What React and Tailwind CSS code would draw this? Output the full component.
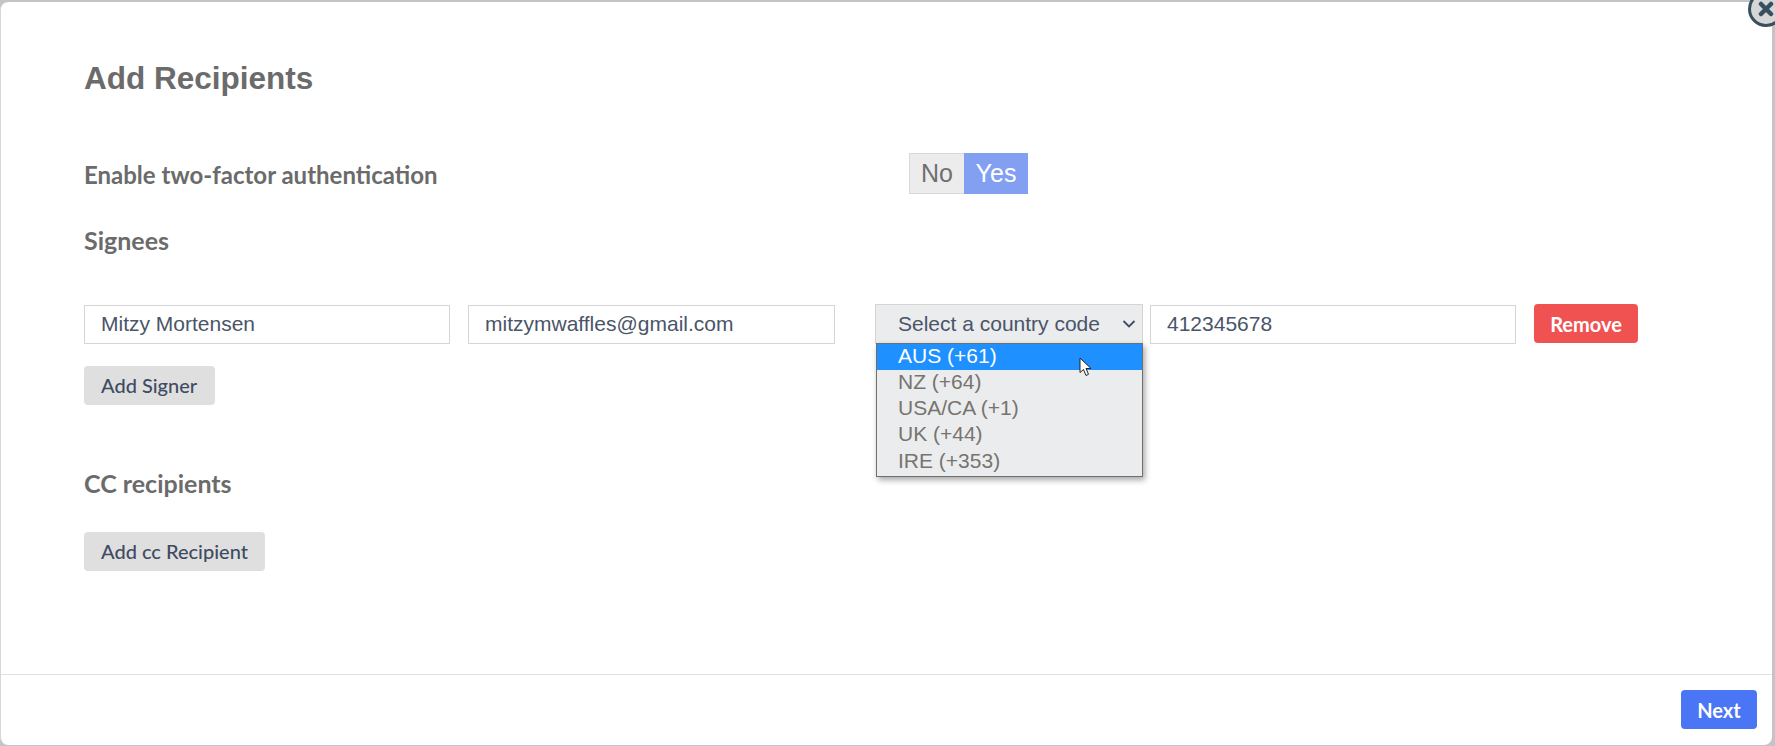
import React from 'react';

const inputClass = "h-[39px] border border-[#d5d5d5] bg-white pl-[16px] pb-[1px] text-[21px] text-[#4a5568] flex items-center";
const grayButton = "h-[39px] rounded-[4px] bg-[#dfdfdf] px-[17px] pb-[1px] text-[20px] font-medium text-[#3f4b63] flex items-center";
const labelClass = "font-bold text-[#6b6b6b]";

function CountryMenu() {
  const options = ['NZ (+64)', 'USA/CA (+1)', 'UK (+44)', 'IRE (+353)'];
  return (
    <div className="absolute left-[1px] top-[39px] z-10 w-[267px] h-[134px] border border-[#6f6f6f] bg-[#ebecee] shadow-[2px_3px_6px_rgba(0,0,0,0.35)] text-[21px]">
      <div className="h-[26px] bg-[#1e90ff] pl-[21px] leading-[24px] text-white">AUS (+61)</div>
      {options.map((o) => (
        <div key={o} className="h-[26.2px] pl-[21px] leading-[24px] text-[#77746f]">{o}</div>
      ))}
    </div>
  );
}

export default function App() {
  return (
    <div className="h-[746px] w-full overflow-hidden bg-[#c4c4c4] pt-[2px] pr-[3px] pb-[1px] relative" style={{ fontFamily: '"Liberation Sans", Arial, sans-serif' }}>
      <div className="h-full flex flex-col rounded-[8px] border-l border-[#d8d8d8] bg-white">
        {/* Body */}
        <div className="flex-1 pl-[83px]">
          <h1 className="mt-[58px] text-[31.5px] leading-[36px] font-bold text-[#6b6b6b]">Add Recipients</h1>

          <div className="mt-[57px] flex items-center h-[41px]">
            <div className={`${labelClass} text-[24px] w-[825px] pt-[2px]`} style={{ fontFamily: 'Lato, sans-serif' }}>Enable two-factor authentication</div>
            <div className="flex h-[41px] text-[25px]">
              <div className="w-[55px] flex items-center justify-center border border-r-0 border-[#d8d8d8] bg-[#ececec] text-[#6f6f6f]">No</div>
              <div className="w-[64px] flex items-center justify-center bg-[#829ff1] text-white">Yes</div>
            </div>
          </div>

          <div className={`${labelClass} text-[25px] mt-[33px] leading-[26px]`} style={{ fontFamily: 'Lato, sans-serif' }}>Signees</div>

          <div className="mt-[52px] flex items-start">
            <div className={`${inputClass} w-[366px]`}>Mitzy Mortensen</div>
            <div className={`${inputClass} w-[367px] ml-[18px]`}>mitzymwaffles@gmail.com</div>
            <div className="relative ml-[40px] w-[268px] -mt-[1px]">
              <div className="h-[40px] border border-[#d5d5d5] bg-[#ebecee] pl-[22px] pr-[6px] pb-[1px] text-[21px] text-[#4a5568] flex items-center justify-between">
                <span>Select a country code</span>
                <svg width="14" height="10" viewBox="0 0 14 10" fill="none" stroke="#3f4b63" strokeWidth="1.8">
                  <path d="M1.5 2 L7 7.5 L12.5 2" />
                </svg>
              </div>
              <CountryMenu />
              {/* Mouse pointer */}
              <svg className="absolute left-[204px] top-[53px] z-20" width="14" height="20" viewBox="0 0 14 20">
                <path d="M1 1 L1 15.5 L4.5 12.5 L7 18.5 L9.5 17.3 L7 11.5 L12 11.5 Z" fill="white" stroke="#222" strokeWidth="1" />
              </svg>
            </div>
            <div className={`${inputClass} w-[366px] ml-[7px]`}>412345678</div>
            <button className="ml-[18px] -mt-[1px] h-[39px] w-[104px] rounded-[4px] bg-[#f05252] text-[20px] font-bold text-white" style={{ fontFamily: 'Lato, sans-serif' }}>Remove</button>
          </div>

          <div className={`${grayButton} w-[131px] mt-[22px]`} style={{ fontFamily: 'Lato, sans-serif' }}>Add Signer</div>

          <div className={`${labelClass} text-[25px] mt-[65px] leading-[26px]`} style={{ fontFamily: 'Lato, sans-serif' }}>CC recipients</div>

          <div className={`${grayButton} w-[181px] mt-[36px]`} style={{ fontFamily: 'Lato, sans-serif' }}>Add cc Recipient</div>
        </div>

        {/* Footer */}
        <div className="h-[71px] border-t border-[#e2e2e2] flex justify-end items-start pt-[15px] pr-[15px]">
          <button className="h-[39px] w-[76px] rounded-[4px] bg-[#4a75f5] text-[20px] font-bold text-white" style={{ fontFamily: 'Lato, sans-serif' }}>Next</button>
        </div>
      </div>

      {/* Close button */}
      <div className="absolute left-[1748px] top-[-9px] w-[36px] h-[36px] rounded-full border-[3px] border-[#36505f] bg-[#d6d6d6] flex items-center justify-center">
        <svg width="16" height="16" viewBox="0 0 16 16" stroke="#36505f" strokeWidth="4.5" strokeLinecap="round">
          <path d="M3 3 L13 13 M13 3 L3 13" />
        </svg>
      </div>
    </div>
  );
}
